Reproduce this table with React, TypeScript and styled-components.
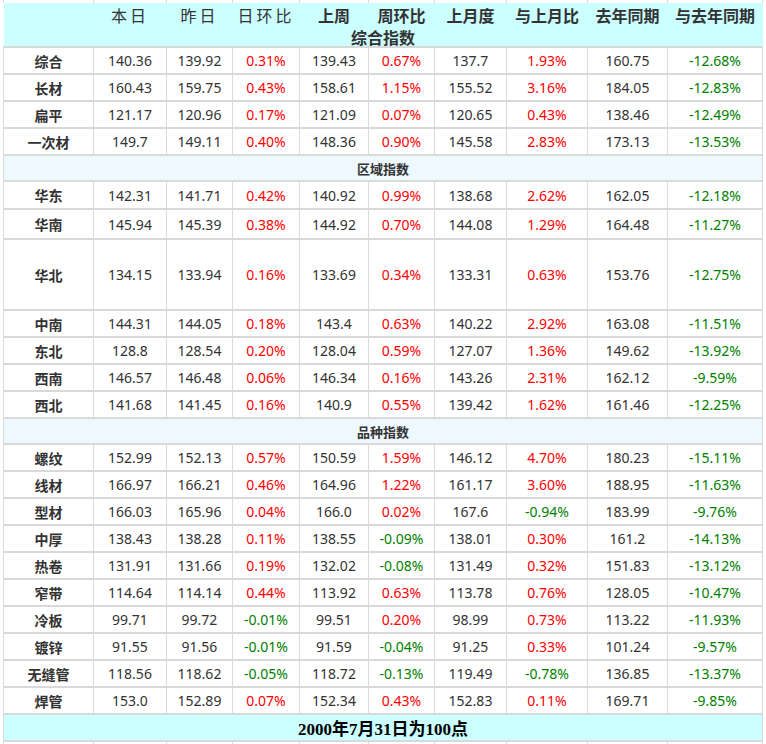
import React from "react";
import styled, { createGlobalStyle } from "styled-components";

const GRID = "#d9d9d9";
const CYAN = "#ccffff";
const BAND = "#eef8ff";
const INK = "#333333";

const GlobalStyle = createGlobalStyle`
  html, body {
    margin: 0;
    padding: 0;
    background: #ffffff;
  }
  body {
    font-family: "Noto Sans", "Noto Sans CJK SC", sans-serif;
    color: ${INK};
  }
`;

const Sheet = styled.div`
  padding-left: 3px;
  width: 763px;
  overflow: hidden;
`;

const Grid = styled.table`
  border-collapse: collapse;
  table-layout: fixed;
  width: 760px;
`;

const StubCell = styled.td`
  height: 3px;
  padding: 0;
  border-left: 1px solid ${GRID};
  border-right: 1px solid ${GRID};
`;

const HeadCell = styled.th<{ $plain?: boolean }>`
  height: 22px;
  padding: 0;
  background: ${CYAN};
  font-family: "Noto Sans CJK SC", sans-serif;
  font-size: 16px;
  line-height: 20px;
  font-weight: ${(p) => (p.$plain ? 400 : 700)};
  letter-spacing: ${(p) => (p.$plain ? "3px" : "0")};
  color: ${INK};
  text-align: center;
  vertical-align: bottom;
  white-space: nowrap;
`;

const TitleCell = styled.th`
  height: 21px;
  padding: 0;
  background: ${CYAN};
  font-family: "Noto Sans CJK SC", sans-serif;
  font-size: 16px;
  line-height: 18px;
  font-weight: 700;
  color: ${INK};
  text-align: center;
  vertical-align: bottom;
`;

const Cell = styled.td`
  padding: 0;
  border-left: 1px solid ${GRID};
  border-right: 1px solid ${GRID};
  border-top: 2px solid ${GRID};
  border-bottom: 2px solid ${GRID};
  text-align: center;
  white-space: nowrap;
`;

const LabelCell = styled(Cell)<{ $h: number }>`
  height: ${(p) => p.$h}px;
  font-family: "Noto Sans CJK SC", sans-serif;
  font-size: 14px;
  font-weight: 700;
  color: ${INK};
`;

const ValueCell = styled(Cell)<{ $tone?: "up" | "down" }>`
  font-size: 14px;
  color: ${(p) =>
    p.$tone === "up" ? "#ff0000" : p.$tone === "down" ? "#008000" : INK};
`;

const BandCell = styled(Cell)`
  height: 24px;
  background: ${BAND};
  font-family: "Noto Sans CJK SC", sans-serif;
  font-size: 13px;
  font-weight: 700;
  color: ${INK};
`;

const FooterCell = styled(Cell)`
  height: 25px;
  background: ${CYAN};
  font-family: "Liberation Serif", "Noto Sans CJK SC", serif;
  font-size: 17px;
  font-weight: 700;
  color: #000000;
`;

const COLUMNS = [90, 73, 66, 67, 69, 66, 72, 81, 80, 95];

const HEADERS: { text: string; plain?: boolean }[] = [
  { text: "" },
  { text: "本日", plain: true },
  { text: "昨日", plain: true },
  { text: "日环比", plain: true },
  { text: "上周" },
  { text: "周环比" },
  { text: "上月度" },
  { text: "与上月比" },
  { text: "去年同期" },
  { text: "与去年同期" },
];

type Line = { kind: "row"; cells: string[]; h?: number } | { kind: "band"; title: string };

const row = (s: string, h?: number): Line => ({ kind: "row", cells: s.split(" "), h });
const band = (title: string): Line => ({ kind: "band", title });

const LINES: Line[] = [
  row("综合 140.36 139.92 0.31% 139.43 0.67% 137.7 1.93% 160.75 -12.68%"),
  row("长材 160.43 159.75 0.43% 158.61 1.15% 155.52 3.16% 184.05 -12.83%"),
  row("扁平 121.17 120.96 0.17% 121.09 0.07% 120.65 0.43% 138.46 -12.49%"),
  row("一次材 149.7 149.11 0.40% 148.36 0.90% 145.58 2.83% 173.13 -13.53%"),
  band("区域指数"),
  row("华东 142.31 141.71 0.42% 140.92 0.99% 138.68 2.62% 162.05 -12.18%", 26),
  row("华南 145.94 145.39 0.38% 144.92 0.70% 144.08 1.29% 164.48 -11.27%", 28),
  row("华北 134.15 133.94 0.16% 133.69 0.34% 133.31 0.63% 153.76 -12.75%", 69),
  row("中南 144.31 144.05 0.18% 143.4 0.63% 140.22 2.92% 163.08 -11.51%"),
  row("东北 128.8 128.54 0.20% 128.04 0.59% 127.07 1.36% 149.62 -13.92%"),
  row("西南 146.57 146.48 0.06% 146.34 0.16% 143.26 2.31% 162.12 -9.59%"),
  row("西北 141.68 141.45 0.16% 140.9 0.55% 139.42 1.62% 161.46 -12.25%"),
  band("品种指数"),
  row("螺纹 152.99 152.13 0.57% 150.59 1.59% 146.12 4.70% 180.23 -15.11%"),
  row("线材 166.97 166.21 0.46% 164.96 1.22% 161.17 3.60% 188.95 -11.63%"),
  row("型材 166.03 165.96 0.04% 166.0 0.02% 167.6 -0.94% 183.99 -9.76%"),
  row("中厚 138.43 138.28 0.11% 138.55 -0.09% 138.01 0.30% 161.2 -14.13%"),
  row("热卷 131.91 131.66 0.19% 132.02 -0.08% 131.49 0.32% 151.83 -13.12%"),
  row("窄带 114.64 114.14 0.44% 113.92 0.63% 113.78 0.76% 128.05 -10.47%"),
  row("冷板 99.71 99.72 -0.01% 99.51 0.20% 98.99 0.73% 113.22 -11.93%"),
  row("镀锌 91.55 91.56 -0.01% 91.59 -0.04% 91.25 0.33% 101.24 -9.57%"),
  row("无缝管 118.56 118.62 -0.05% 118.72 -0.13% 119.49 -0.78% 136.85 -13.37%"),
  row("焊管 153.0 152.89 0.07% 152.34 0.43% 152.83 0.11% 169.71 -9.85%"),
];

const toneOf = (value: string): "up" | "down" | undefined => {
  if (!value.endsWith("%")) return undefined;
  return value.startsWith("-") ? "down" : "up";
};

const Stub: React.FC = () => (
  <tr>
    {COLUMNS.map((_, i) => (
      <StubCell key={i} />
    ))}
  </tr>
);

export default function App() {
  return (
    <>
      <GlobalStyle />
      <Sheet>
        <Grid>
          <colgroup>
            {COLUMNS.map((w, i) => (
              <col key={i} style={{ width: w }} />
            ))}
          </colgroup>
          <tbody>
            <Stub />
            <tr>
              {HEADERS.map((h, i) => (
                <HeadCell key={i} $plain={h.plain}>
                  {h.text}
                </HeadCell>
              ))}
            </tr>
            <tr>
              <TitleCell colSpan={10}>综合指数</TitleCell>
            </tr>
            {LINES.map((line, i) =>
              line.kind === "band" ? (
                <tr key={i}>
                  <BandCell colSpan={10}>{line.title}</BandCell>
                </tr>
              ) : (
                <tr key={i}>
                  <LabelCell $h={line.h ?? 25}>{line.cells[0]}</LabelCell>
                  {line.cells.slice(1).map((v, j) => (
                    <ValueCell key={j} $tone={toneOf(v)}>
                      {v}
                    </ValueCell>
                  ))}
                </tr>
              )
            )}
            <tr>
              <FooterCell colSpan={10}>2000年7月31日为100点</FooterCell>
            </tr>
            <Stub />
          </tbody>
        </Grid>
      </Sheet>
    </>
  );
}
